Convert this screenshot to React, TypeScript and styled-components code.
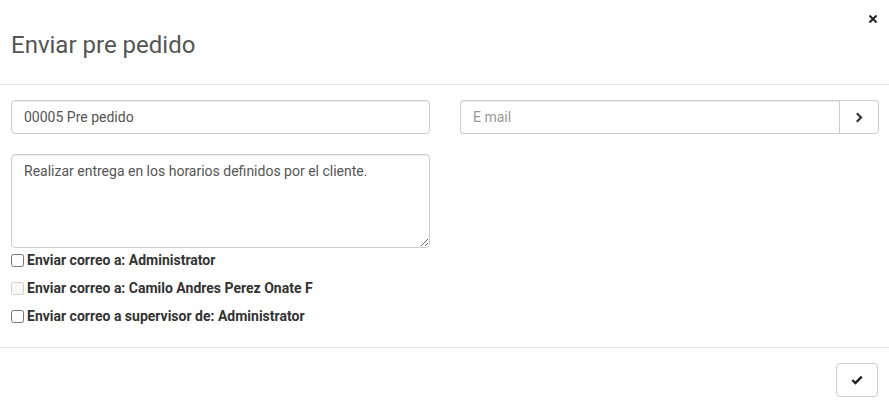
import { createGlobalStyle, styled } from "styled-components";

const Global = createGlobalStyle`
    html, body {
        margin: 0;
        padding: 0;
        background: #fff;
        font-family: Roboto, "Liberation Sans", sans-serif;
        font-size: 14px;
        color: #333;
    }
    * { box-sizing: border-box; }
`

const opciones = [
    { texto: "Enviar correo a: Administrator", deshabilitado: false },
    { texto: "Enviar correo a: Camilo Andres Perez Onate F", deshabilitado: true },
    { texto: "Enviar correo a supervisor de: Administrator", deshabilitado: false },
]

const App = () => {
    return (
        <>
            <Global />
            <Modal>
                <Header>
                    <Titulo>Enviar pre pedido</Titulo>
                    <Cerrar aria-label="Cerrar">
                        <svg width="8" height="8" viewBox="0 0 8 8">
                            <path d="M1.2 1.2 L6.8 6.8 M6.8 1.2 L1.2 6.8" stroke="#222" strokeWidth="2" strokeLinecap="square" />
                        </svg>
                    </Cerrar>
                </Header>

                <Body>
                    <Columna>
                        <Input defaultValue="00005 Pre pedido" />
                        <Textarea defaultValue="Realizar entrega en los horarios definidos por el cliente." />
                        <Opciones>
                            {opciones.map((o) => (
                                <Opcion key={o.texto}>
                                    <Check type="checkbox" disabled={o.deshabilitado} />
                                    {o.texto}
                                </Opcion>
                            ))}
                        </Opciones>
                    </Columna>
                    <Columna>
                        <Grupo>
                            <GrupoInput placeholder="E mail" />
                            <GrupoBoton aria-label="Enviar">
                                <svg width="8" height="11" viewBox="0 0 8 11">
                                    <path d="M1.8 1.3 L6 5.5 L1.8 9.7" fill="none" stroke="#333" strokeWidth="2.2" />
                                </svg>
                            </GrupoBoton>
                        </Grupo>
                    </Columna>
                </Body>

                <Footer>
                    <Boton aria-label="Aceptar">
                        <svg width="12" height="10" viewBox="0 0 12 10">
                            <path d="M1.3 5 L4.4 8 L10.7 1.6" fill="none" stroke="#222" strokeWidth="2.4" />
                        </svg>
                    </Boton>
                </Footer>
            </Modal>
        </>
    )
}

const Modal = styled.div`
    width: 889px;
    background: #fff;
`

const Header = styled.div`
    position: relative;
    height: 85px;
    padding: 30px 11px 0;
    border-bottom: 1px solid #e5e5e5;
`

const Titulo = styled.h4`
    margin: 0;
    font-size: 24px;
    font-weight: 400;
    color: #555;
    line-height: 30px;
`

const Cerrar = styled.button`
    position: absolute;
    top: 14px;
    right: 11px;
    width: 10px;
    height: 10px;
    padding: 0;
    border: 0;
    background: none;
    display: flex;
    align-items: center;
    justify-content: center;
`

const Body = styled.div`
    display: grid;
    grid-template-columns: 419px 419px;
    column-gap: 30px;
    padding: 15px 10px 21px 11px;
    border-bottom: 1px solid #e5e5e5;
`

const Columna = styled.div`
    display: flex;
    flex-direction: column;
`

const Input = styled.input`
    height: 34px;
    width: 100%;
    padding: 6px 12px;
    font: inherit;
    font-size: 14px;
    color: #555;
    border: 1px solid #ccc;
    border-radius: 4px;
    box-shadow: inset 0 1px 1px rgba(0,0,0,.075);
    outline: none;
`

const Textarea = styled.textarea`
    margin-top: 20px;
    height: 94px;
    width: 100%;
    padding: 6px 12px;
    font: inherit;
    font-size: 14px;
    line-height: 20px;
    color: #555;
    border: 1px solid #ccc;
    border-radius: 4px;
    box-shadow: inset 0 1px 1px rgba(0,0,0,.075);
    resize: vertical;
    outline: none;
`

const Opciones = styled.div`
    display: flex;
    flex-direction: column;
    gap: 8px;
    margin-top: 2px;
`

const Opcion = styled.label`
    display: flex;
    align-items: center;
    height: 20px;
    font-weight: 700;
    font-size: 14px;
    color: #333;
`

const Check = styled.input`
    margin: 0 3px 0 0;
    width: 13px;
    height: 13px;
`

const Grupo = styled.div`
    display: flex;
    height: 34px;
`

const GrupoInput = styled.input`
    flex: 1;
    min-width: 0;
    padding: 6px 12px;
    font: inherit;
    font-size: 14px;
    color: #555;
    border: 1px solid #ccc;
    border-right: 0;
    border-radius: 4px 0 0 4px;
    box-shadow: inset 0 1px 1px rgba(0,0,0,.075);
    outline: none;

    &::placeholder { color: #999; }
`

const GrupoBoton = styled.button`
    width: 40px;
    padding: 0;
    background: #fff;
    border: 1px solid #ccc;
    border-radius: 0 4px 4px 0;
    display: flex;
    align-items: center;
    justify-content: center;
`

const Footer = styled.div`
    display: flex;
    justify-content: flex-end;
    padding: 15px 11px 15px;
`

const Boton = styled.button`
    width: 42px;
    height: 34px;
    background: #fff;
    border: 1px solid #ccc;
    border-radius: 4px;
    display: flex;
    align-items: center;
    justify-content: center;
    padding: 0;
`

export default App;
